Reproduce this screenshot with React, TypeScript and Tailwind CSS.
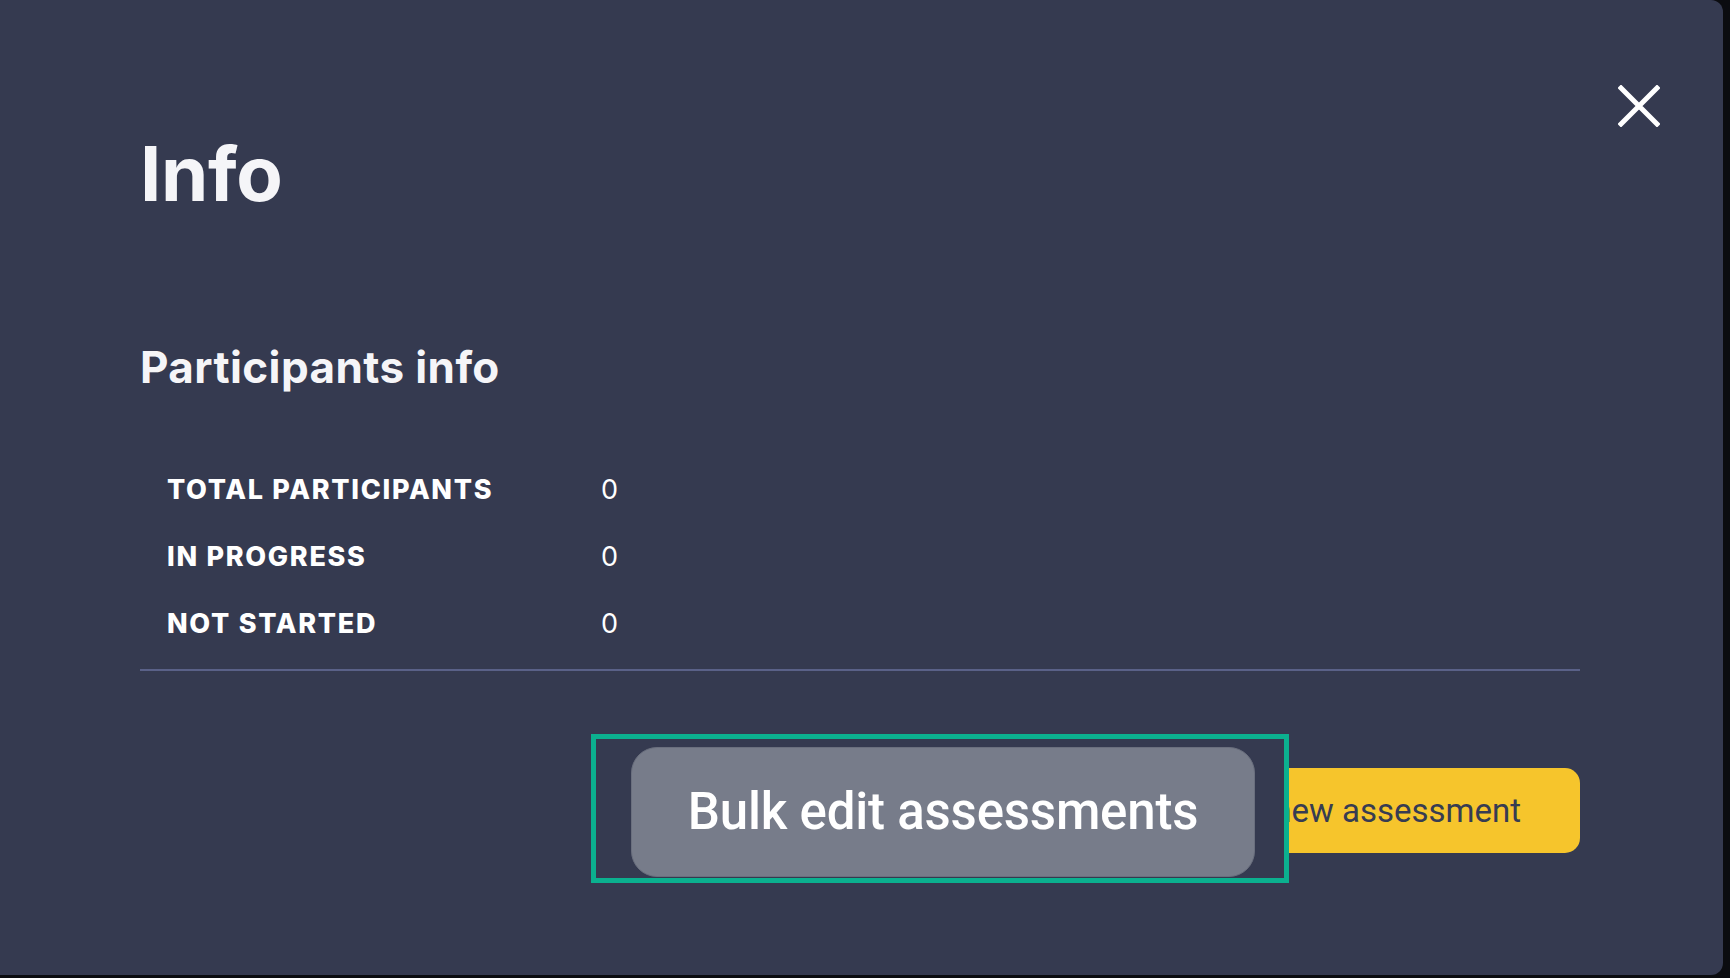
import React from "react";

const stats = [
  { label: "TOTAL PARTICIPANTS", value: 0 },
  { label: "IN PROGRESS", value: 0 },
  { label: "NOT STARTED", value: 0 },
];

function CloseIcon() {
  return (
    <svg width="42" height="42" viewBox="0 0 42 42" fill="none">
      <path d="M3 3L39 39M39 3L3 39" stroke="white" strokeWidth="5" strokeLinecap="square" />
    </svg>
  );
}

export default function App() {
  return (
    <main className="min-h-screen w-full bg-[#0b0c10]">
      <div className="relative h-[975px] w-[1723px] rounded-r-[12px] bg-[#353a50] pl-[140px] pr-[143px] pt-[135px] text-[#f5f5f8]">
        <button className="absolute right-[63px] top-[85px]" aria-label="Close">
          <CloseIcon />
        </button>

        <h1 className="font-['Inter',sans-serif] text-[76px] font-bold leading-none tracking-[-0.3px]">Info</h1>

        <h2 className="mt-[134px] font-['Inter',sans-serif] text-[44px] font-bold leading-none tracking-[0.4px]">
          Participants info
        </h2>

        <div className="mt-[87px] flex flex-col gap-[40px] pl-[27px]">
          {stats.map((s) => (
            <div key={s.label} className="flex h-[27px] items-baseline font-['Inter',sans-serif] text-[27px] leading-[27px] text-white">
              <span className="w-[434px] font-extrabold tracking-[1.7px]">{s.label}</span>
              <span className="font-normal">{s.value}</span>
            </div>
          ))}
        </div>

        <div className="mt-[32px] h-[2px] w-full bg-[#5a6188]" />

        <div className="mt-[97px] flex justify-end gap-[24px]">
          <button className="h-[85px] rounded-[15px] bg-[#777c8a] px-[40px] font-['Roboto',sans-serif] text-[33px] font-medium text-white">
            Bulk edit assessments
          </button>
          <button className="h-[85px] rounded-[15px] bg-[#f6c52c] pl-[48px] pr-[59px] font-['Roboto',sans-serif] text-[33px] text-[#373c52]">
            Create new assessment
          </button>
        </div>

        {/* highlight overlay */}
        <div className="absolute left-[591px] top-[734px] h-[149px] w-[698px] border-[5px] border-[#0bb08f] bg-[#353a50] pl-[35px] pt-[8px]">
          <div className="flex h-[130px] w-[624px] items-center justify-center rounded-[26px] border border-[#6a6f7e] bg-[#777c8a] font-['Roboto',sans-serif] text-[51px] font-medium tracking-[-0.2px] text-white">
            Bulk edit assessments
          </div>
        </div>
      </div>
    </main>
  );
}
